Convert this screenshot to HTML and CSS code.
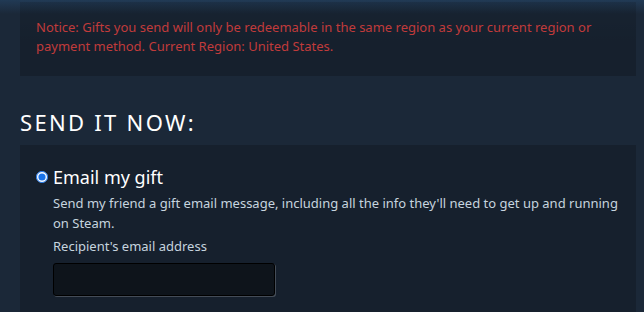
FILE: index.html
```html
<!DOCTYPE html>
<html lang="en">
<head>
  <meta charset="UTF-8">
  <title>Send Gift</title>
  <link rel="stylesheet" href="styles.css">
</head>
<body>
  <div class="page">
    <div class="notice">
      Notice: Gifts you send will only be redeemable in the same region as your current region or payment method. Current Region: United States.
    </div>
    <h2 class="section-title">SEND IT NOW:</h2>
    <div class="gift-panel">
      <label class="option">
        <input type="radio" name="send" checked>
        <span class="option-title">Email my gift</span>
      </label>
      <div class="option-body">
        <p class="desc">Send my friend a gift email message, including all the info they'll need to get up and running on Steam.</p>
        <div class="field-label">Recipient's email address</div>
        <input type="text" class="text-input">
      </div>
    </div>
  </div>
</body>
</html>
```

FILE: styles.css
```css
/* General Styling */
body, html {
  margin: 0;
  padding: 0;
  background: #1b2838;
  font-family: "Noto Sans", Arial, sans-serif;
  font-size: 13px;
}
body {
  background: linear-gradient(to bottom, #213a55 0px, #1b2838 14px);
}
.page {
  padding: 2px 8px 0 20px;
}

/* Notice */
.notice {
  background: linear-gradient(to bottom, rgba(0, 0, 0, 0.12), rgba(0, 0, 0, 0.2) 40px);
  color: #c13b3b;
  line-height: 19px;
  padding: 16px 40px 20px 16px;
}

/* Heading */
.section-title {
  margin: 0;
  padding: 27px 0 0 0;
  color: #ffffff;
  font-size: 22px;
  font-weight: normal;
  letter-spacing: 2.3px;
  line-height: 38px;
  height: 42px;
}

/* Gift panel */
.gift-panel {
  background: #16202d;
  padding: 20px 16px 16px 16px;
  min-height: 150px;
}
.option {
  display: flex;
  align-items: center;
  gap: 5px;
}
.option input {
  margin: 0;
  width: 12px;
  height: 12px;
  accent-color: #1a73e8;
}
.option-title {
  color: #ffffff;
  font-size: 18px;
  line-height: 24px;
}
.option-body {
  padding-left: 17px;
}
.desc {
  margin: 4px 0 0 0;
  color: #c6d4df;
  line-height: 20px;
}
.field-label {
  color: #c6d4df;
  margin-top: 3px;
  line-height: 20px;
}
.text-input {
  display: block;
  margin-top: 7px;
  width: 222px;
  height: 33px;
  box-sizing: border-box;
  background: #0e141b;
  border: 1px solid #000;
  border-radius: 3px;
  box-shadow: 1px 1px 0 rgba(255, 255, 255, 0.2);
}
```
